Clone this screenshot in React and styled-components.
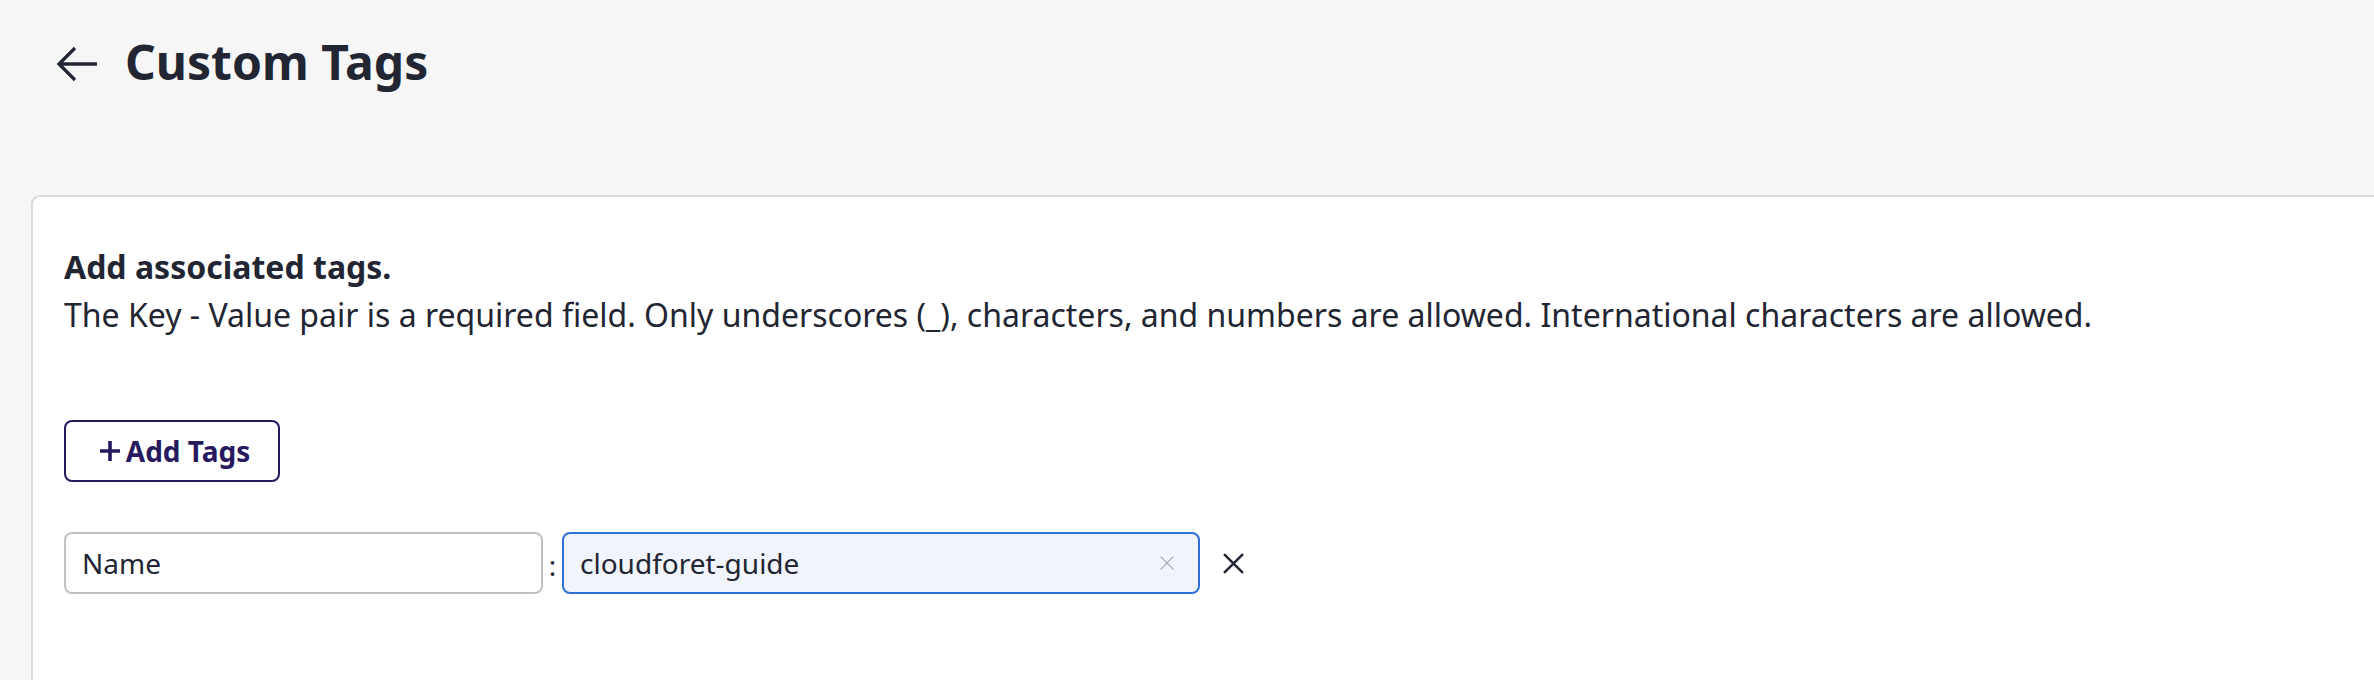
import styled, { createGlobalStyle } from "styled-components";

const GlobalStyle = createGlobalStyle`
  body {
    margin: 0;
    background: #f6f6f6;
    font-family: "Noto Sans", "Liberation Sans", sans-serif;
    color: #222532;
    overflow: hidden;
  }
`;

const Page = styled.div`
  display: flex;
  flex-direction: column;
  height: 680px;
  overflow: hidden;
`;

const Header = styled.div`
  display: flex;
  align-items: center;
  padding: 30px 0 0 56px;
  gap: 27px;
  height: 64px;
`;

const BackButton = styled.button`
  display: flex;
  align-items: center;
  background: none;
  border: none;
  padding: 0;
  margin-top: 4px;
  cursor: pointer;
  color: #222532;
`;

const Title = styled.h1`
  margin: 0;
  font-size: 48px;
  line-height: 64px;
  font-weight: 700;
  color: #222532;
`;

const Card = styled.section`
  flex: 1;
  margin: 101px 0 0 31px;
  background: #fff;
  border: 2px solid #dadada;
  border-right: none;
  border-bottom: none;
  border-radius: 9px 0 0 0;
  padding: 46px 31px 0;
`;

const Lead = styled.p`
  margin: 0;
  font-size: 32px;
  line-height: 48px;
  font-weight: 700;
`;

const Help = styled.p`
  margin: 0;
  font-size: 32px;
  line-height: 48px;
  font-weight: 400;
`;

const AddButton = styled.button`
  display: flex;
  align-items: center;
  justify-content: center;
  gap: 6px;
  margin-top: 81px;
  width: 216px;
  height: 62px;
  padding: 0 0 0 6px;
  border: 2px solid #27195e;
  border-radius: 8px;
  background: #fff;
  color: #27195e;
  font-family: inherit;
  font-size: 28px;
  font-weight: 700;
  cursor: pointer;
`;

const TagRow = styled.div`
  display: flex;
  align-items: center;
  margin-top: 50px;
`;

const Field = styled.div`
  display: flex;
  align-items: center;
  box-sizing: border-box;
  width: ${(p) => p.width}px;
  height: 62px;
  padding: 0 24px 0 16px;
  border: 2px solid ${(p) => (p.focused ? "#2f6fd8" : "#c1c1c5")};
  border-radius: 8px;
  background: ${(p) => (p.focused ? "#f1f4fa" : "#fff")};
`;

const FieldText = styled.span`
  flex: 1;
  font-size: 28px;
  line-height: 40px;
  color: #222532;
`;

const Colon = styled.span`
  width: 19px;
  text-align: center;
  font-size: 28px;
  line-height: 40px;
  margin-top: 4px;
`;

const IconButton = styled.button`
  display: flex;
  align-items: center;
  background: none;
  border: none;
  padding: 0;
  margin-left: ${(p) => p.offset || 0}px;
  color: ${(p) => p.color};
  cursor: pointer;
`;

const Cross = ({ size, stroke }) => (
  <svg width={size} height={size} viewBox="0 0 20 20" fill="none">
    <path d="M1 1L19 19M19 1L1 19" stroke="currentColor" strokeWidth={stroke} />
  </svg>
);

export default function App() {
  return (
    <Page>
      <GlobalStyle />
      <Header>
        <BackButton aria-label="back">
          <svg width="42" height="36" viewBox="0 0 42 36" fill="none">
            <path
              d="M41 18H3M19 2L3 18L19 34"
              stroke="currentColor"
              strokeWidth="3.3"
            />
          </svg>
        </BackButton>
        <Title>Custom Tags</Title>
      </Header>
      <Card>
        <Lead>Add associated tags.</Lead>
        <Help>
          The Key - Value pair is a required field. Only underscores (_),
          characters, and numbers are allowed. International characters are
          allowed.
        </Help>
        <AddButton>
          <svg width="20" height="20" viewBox="0 0 20 20" fill="none">
            <path d="M10 0V20M0 10H20" stroke="currentColor" strokeWidth="3.6" />
          </svg>
          Add Tags
        </AddButton>
        <TagRow>
          <Field width={479}>
            <FieldText>Name</FieldText>
          </Field>
          <Colon>:</Colon>
          <Field width={638} focused>
            <FieldText>cloudforet-guide</FieldText>
            <IconButton color="#a3a3a8" aria-label="clear">
              <Cross size={14} stroke={1.6} />
            </IconButton>
          </Field>
          <IconButton offset={23} color="#222532" aria-label="remove">
            <Cross size={21} stroke={2.4} />
          </IconButton>
        </TagRow>
      </Card>
    </Page>
  );
}
